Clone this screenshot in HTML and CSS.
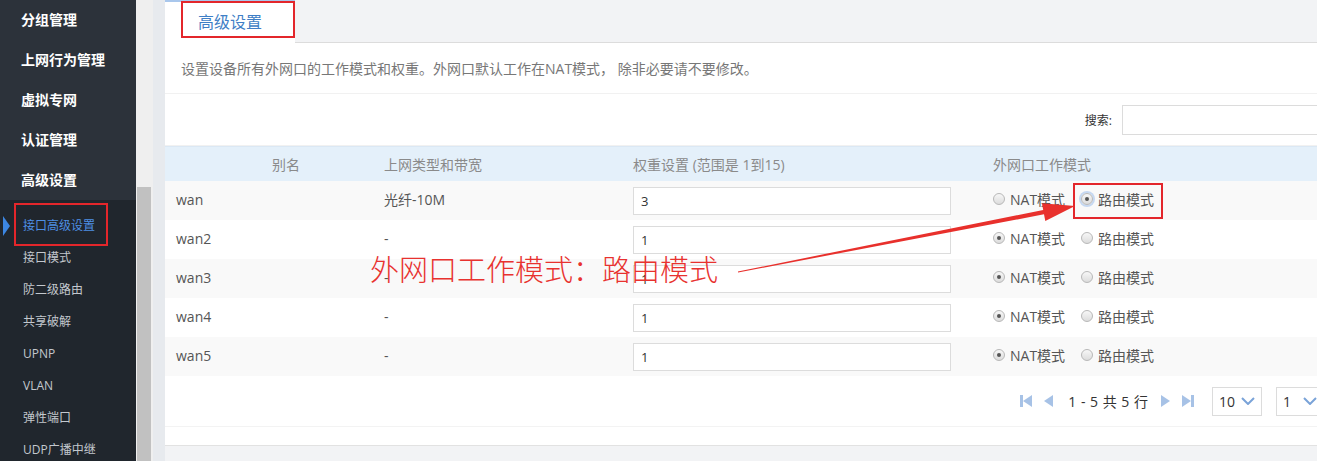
FILE: index.html
```html
<!DOCTYPE html>
<html lang="zh-CN">
<head>
    <meta charset="UTF-8">
    <title>高级设置</title>
    <link rel="stylesheet" href="styles.css">
</head>
<body>
<div class="page">
    <aside class="sidebar">
        <ul class="menu">
            <li>分组管理</li>
            <li>上网行为管理</li>
            <li>虚拟专网</li>
            <li>认证管理</li>
            <li>高级设置</li>
        </ul>
        <ul class="submenu">
            <li class="active">接口高级设置</li>
            <li>接口模式</li>
            <li>防二级路由</li>
            <li>共享破解</li>
            <li>UPNP</li>
            <li>VLAN</li>
            <li>弹性端口</li>
            <li>UDP广播中继</li>
        </ul>
    </aside>
    <div class="scrollbar"><div class="thumb"></div></div>
    <div class="gutter"></div>

    <main class="main">
        <div class="tabs">
            <div class="tab">高级设置</div>
        </div>
        <div class="panel">
            <p class="desc">设置设备所有外网口的工作模式和权重。外网口默认工作在NAT模式， 除非必要请不要修改。</p>
            <div class="search">
                <label>搜索:</label>
                <input type="text">
            </div>

            <div class="table">
                <div class="row head">
                    <div class="cell first">别名</div>
                    <div class="cell">上网类型和带宽</div>
                    <div class="cell">权重设置 (范围是 1到15)</div>
                    <div class="cell">外网口工作模式</div>
                </div>
                <div class="row odd">
                    <div class="cell">wan</div>
                    <div class="cell">光纤-10M</div>
                    <div class="cell"><input class="weight" type="text" value="3"></div>
                    <div class="cell modes">
                        <span class="radio"></span><span class="mode">NAT模式</span>
                        <span class="radio checked focus"></span><span class="mode">路由模式</span>
                    </div>
                </div>
                <div class="row">
                    <div class="cell">wan2</div>
                    <div class="cell">-</div>
                    <div class="cell"><input class="weight" type="text" value="1"></div>
                    <div class="cell modes">
                        <span class="radio checked"></span><span class="mode">NAT模式</span>
                        <span class="radio"></span><span class="mode">路由模式</span>
                    </div>
                </div>
                <div class="row odd">
                    <div class="cell">wan3</div>
                    <div class="cell">-</div>
                    <div class="cell"><input class="weight" type="text" value="1"></div>
                    <div class="cell modes">
                        <span class="radio checked"></span><span class="mode">NAT模式</span>
                        <span class="radio"></span><span class="mode">路由模式</span>
                    </div>
                </div>
                <div class="row">
                    <div class="cell">wan4</div>
                    <div class="cell">-</div>
                    <div class="cell"><input class="weight" type="text" value="1"></div>
                    <div class="cell modes">
                        <span class="radio checked"></span><span class="mode">NAT模式</span>
                        <span class="radio"></span><span class="mode">路由模式</span>
                    </div>
                </div>
                <div class="row odd">
                    <div class="cell">wan5</div>
                    <div class="cell">-</div>
                    <div class="cell"><input class="weight" type="text" value="1"></div>
                    <div class="cell modes">
                        <span class="radio checked"></span><span class="mode">NAT模式</span>
                        <span class="radio"></span><span class="mode">路由模式</span>
                    </div>
                </div>
            </div>

            <div class="pager">
                <svg class="pg first" width="12" height="12" viewBox="0 0 12 12"><rect x="0" y="0" width="3" height="12" fill="#a7c2e6"/><polygon points="12,0 3,6 12,12" fill="#a7c2e6"/></svg>
                <svg class="pg prev" width="9" height="12" viewBox="0 0 9 12"><polygon points="9,0 0,6 9,12" fill="#a7c2e6"/></svg>
                <span class="count">1 - 5 共 5 行</span>
                <svg class="pg next" width="9" height="12" viewBox="0 0 9 12"><polygon points="0,0 9,6 0,12" fill="#a7c2e6"/></svg>
                <svg class="pg last" width="12" height="12" viewBox="0 0 12 12"><polygon points="0,0 9,6 0,12" fill="#a7c2e6"/><rect x="9" y="0" width="3" height="12" fill="#a7c2e6"/></svg>
                <div class="select size">10<svg width="14" height="8" viewBox="0 0 14 8"><polyline points="1,1 7,7 13,1" fill="none" stroke="#7aa3d8" stroke-width="2"/></svg></div>
                <div class="select pageno">1<svg width="14" height="8" viewBox="0 0 14 8"><polyline points="1,1 7,7 13,1" fill="none" stroke="#7aa3d8" stroke-width="2"/></svg></div>
            </div>
        </div>
    </main>

    <!-- annotations drawn over the screenshot -->
    <div class="mark mark-tab"></div>
    <div class="mark mark-side"></div>
    <div class="mark mark-radio"></div>
    <div class="note">外网口工作模式：路由模式</div>
    <svg class="arrow" width="1317" height="461" viewBox="0 0 1317 461">
        <polygon points="738.1,272.5 1044,214.3 1045.3,221 1075,206 1041.9,203.3 1043.2,210 737.9,271.5" fill="#e8302c"/>
    </svg>
</div>
</body>
</html>
```

FILE: styles.css
```css
* {
    margin: 0;
    padding: 0;
    box-sizing: border-box;
}

body {
    font-family: "Open Sans", "Noto Sans CJK SC", sans-serif;
    background: #f2f3f5;
    width: 1317px;
    height: 461px;
    overflow: hidden;
}

.page {
    position: relative;
    display: flex;
    height: 461px;
}

/* sidebar */
.sidebar {
    width: 136px;
    flex-shrink: 0;
    background: #20262d;
}

.menu {
    list-style: none;
    background: #2c323a;
}

.menu li {
    height: 40px;
    line-height: 40px;
    padding-left: 21px;
    color: #fff;
    font-size: 14px;
    font-weight: bold;
}

.submenu {
    list-style: none;
    padding-top: 10px;
}

.submenu li {
    position: relative;
    height: 32px;
    line-height: 32px;
    padding-left: 23px;
    color: #c3c8ce;
    font-size: 12px;
}

.submenu li.active {
    color: #4e8fe4;
}

.submenu li.active::before {
    content: "";
    position: absolute;
    left: 3px;
    top: 6px;
    border-left: 7px solid #3c86e2;
    border-top: 10px solid transparent;
    border-bottom: 10px solid transparent;
}

.scrollbar {
    width: 17px;
    flex-shrink: 0;
    background: #efefef;
    padding: 187px 2px 0 1px;
}

.thumb {
    height: 100%;
    background: #c1c1c1;
}

.gutter {
    width: 12px;
    flex-shrink: 0;
    background: #e7eaee;
}

/* main */
.main {
    flex: 1;
    overflow: hidden;
    background: #f2f3f5;
}

.tabs {
    height: 43px;
    border-bottom: 1px solid #dcdcdc;
}

.tab {
    width: 130px;
    height: 43px;
    background: #fff;
    border-top: 2px solid #a9c7ec;
    color: #3f7fc6;
    font-size: 16px;
    text-align: center;
    line-height: 40px;
}

.panel {
    background: #fff;
    height: 403px;
    border-bottom: 1px solid #e2e2e2;
}

.desc {
    height: 51px;
    line-height: 51px;
    padding-left: 16px;
    color: #777;
    font-size: 14px;
    border-bottom: 1px solid #f1f1f1;
}

.search {
    height: 52px;
    display: flex;
    align-items: center;
    justify-content: flex-end;
    border-bottom: 1px solid #f1f1f1;
}

.search label {
    font-size: 12px;
    color: #333;
    margin-right: 10px;
}

.search input {
    width: 215px;
    height: 30px;
    margin-right: -20px;
    border: 1px solid #dcdcdc;
}

.row {
    display: grid;
    grid-template-columns: 209px 249px 360px 1fr;
    height: 39px;
    align-items: center;
    font-size: 14px;
    color: #555;
}

.row.odd {
    background: #f9f9f9;
}

.row .cell {
    padding-left: 10px;
    padding-bottom: 3px;
}

.row .cell:first-child {
    padding-left: 11px;
}

.row .cell:nth-child(3) {
    padding-bottom: 0;
}

.row.head {
    height: 35px;
    background: #e4f0fa;
    border-top: 1px solid #dbe8f4;
    color: #8a8a8a;
    font-size: 14px;
}

.row.head .cell {
    padding-bottom: 0;
}

.row.head .cell.first {
    padding-left: 107px;
}

.weight {
    width: 318px;
    height: 28px;
    border: 1px solid #dcdcdc;
    padding-left: 7px;
    font-family: "Open Sans", sans-serif;
    font-size: 13px;
    color: #333;
}

.modes {
    display: flex;
    align-items: center;
}

.radio {
    position: relative;
    width: 12px;
    height: 12px;
    border-radius: 50%;
    border: 1px solid #b8b8b8;
    background: linear-gradient(#f7f7f7, #dcdcdc);
    margin-right: 5px;
}

.radio.checked::after {
    content: "";
    position: absolute;
    left: 3px;
    top: 3px;
    width: 4px;
    height: 4px;
    border-radius: 50%;
    background: #555;
}

.radio.focus {
    box-shadow: 0 0 0 2px #c6d8f1;
}

.mode + .radio {
    margin-left: 16px;
}

.pager {
    height: 51px;
    display: flex;
    align-items: center;
    justify-content: flex-end;
    border-bottom: 1px solid #f3f3f3;
}

.pg.prev {
    margin-left: 12px;
}

.count {
    margin: 0 13px 0 15px;
    font-size: 14px;
    word-spacing: 1px;
    color: #333;
}

.pg.last {
    margin-left: 12px;
}

.select {
    display: flex;
    align-items: center;
    gap: 6px;
    height: 29px;
    border: 1px solid #dcdcdc;
    padding-left: 6px;
    font-size: 14px;
    color: #333;
}

.select.size {
    width: 50px;
    margin-left: 18px;
}

.select.pageno {
    width: 60px;
    margin-left: 14px;
    margin-right: -19px;
    gap: 12px;
}

/* annotations */
.mark {
    position: absolute;
    border: 2px solid #e3262b;
}

.mark-tab {
    left: 181px;
    top: 1px;
    width: 114px;
    height: 37px;
}

.mark-side {
    left: 14px;
    top: 203px;
    width: 94px;
    height: 43px;
}

.mark-radio {
    left: 1073px;
    top: 183px;
    width: 90px;
    height: 36px;
}

.note {
    position: absolute;
    left: 370px;
    top: 250px;
    font-family: "Noto Sans CJK SC", sans-serif;
    font-weight: 300;
    font-size: 29px;
    line-height: 36px;
    color: #e8322f;
}

.arrow {
    position: absolute;
    left: 0;
    top: 0;
    pointer-events: none;
}
```
